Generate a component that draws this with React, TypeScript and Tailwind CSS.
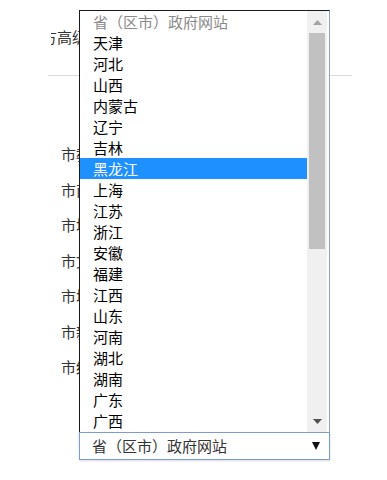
const provinces = [
  '天津', '河北', '山西', '内蒙古', '辽宁', '吉林', '黑龙江', '上海', '江苏', '浙江',
  '安徽', '福建', '江西', '山东', '河南', '湖北', '湖南', '广东', '广西',
];

const labels = ['市教', '市商', '市城', '市文', '市城', '市新', '市统'];

const font = { fontFamily: '"Microsoft YaHei", "Noto Sans CJK SC", sans-serif' };

export default function App() {
  return (
    <div className="relative w-[387px] h-[480px] bg-white overflow-hidden text-[15px] text-[#333]" style={font}>
      {/* page behind the open select */}
      <div className="pt-[27px] pl-[51px]">
        <div className="w-[40px] overflow-hidden whitespace-nowrap leading-[20px]">
          <span className="-ml-[9px]">方高级搜索</span>
        </div>
      </div>
      <div className="ml-[48px] mt-[28px] w-[304px] h-px bg-[#d9d9d9]" />
      <div className="pl-[61px] pt-[68px] flex flex-col">
        {labels.map((l, i) => (
          <div key={i} className="h-[35.5px] leading-[20px] whitespace-nowrap">{l}</div>
        ))}
      </div>

      {/* open dropdown */}
      <div className="absolute left-[79px] top-[10px] w-[251px]">
        <div className="flex h-[422px] bg-white border-t border-l border-[#1a1a1a] border-r border-r-[#8fa4c8]">
          <div className="flex-1 flex flex-col">
            <div className="h-[21px] leading-[21px] pl-[13px] text-[#8a8a8a]">省（区市）政府网站</div>
            {provinces.map((p) => (
              <div
                key={p}
                className={
                  p === '黑龙江'
                    ? 'h-[21px] leading-[21px] pl-[13px] bg-[#1e90ff] text-white'
                    : 'h-[21px] leading-[21px] pl-[13px] text-black'
                }
              >
                {p}
              </div>
            ))}
          </div>
          <div className="w-[20px] mr-[2px] bg-[#f0f0f0] flex flex-col">
            <div className="h-[22px] flex items-center justify-center">
              <svg width="9" height="5" viewBox="0 0 9 5">
                <path d="M0 5 L4.5 0 L9 5 Z" fill="#a3a3a3" />
              </svg>
            </div>
            <div className="mx-[2px] h-[216px] bg-[#c1c1c1]" />
            <div className="flex-1" />
            <div className="h-[22px] flex items-center justify-center">
              <svg width="9" height="5" viewBox="0 0 9 5">
                <path d="M0 0 L9 0 L4.5 5 Z" fill="#505050" />
              </svg>
            </div>
          </div>
        </div>
        <div className="h-[28px] border border-[#7a9cd3] bg-white flex items-center pl-[12px] pr-[9px] shadow-[0_1px_2px_rgba(0,0,0,0.15)]">
          <span className="flex-1 text-[#333]">省（区市）政府网站</span>
          <svg width="8" height="8" viewBox="0 0 8 8">
            <path d="M0 0 L8 0 L4 8 Z" fill="#111" />
          </svg>
        </div>
      </div>
    </div>
  );
}
